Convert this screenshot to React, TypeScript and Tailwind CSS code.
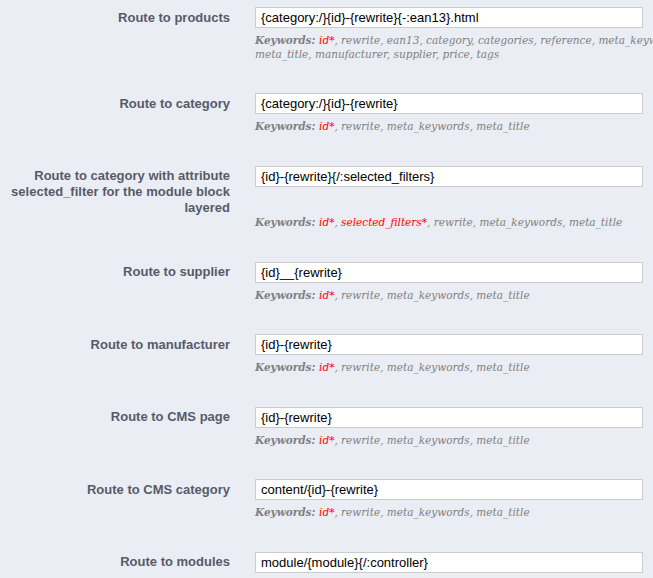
import React from "react";

type Kw = { text: string; req?: boolean };

type Route = {
  label: string;
  value: string;
  keywords: Kw[][];
};

const routes: Route[] = [
  {
    label: "Route to products",
    value: "{category:/}{id}-{rewrite}{-:ean13}.html",
    keywords: [
      [
        { text: "id*", req: true },
        { text: "rewrite" },
        { text: "ean13" },
        { text: "category" },
        { text: "categories" },
        { text: "reference" },
        { text: "meta_keywords" },
      ],
      [
        { text: "meta_title" },
        { text: "manufacturer" },
        { text: "supplier" },
        { text: "price" },
        { text: "tags" },
      ],
    ],
  },
  {
    label: "Route to category",
    value: "{category:/}{id}-{rewrite}",
    keywords: [[{ text: "id*", req: true }, { text: "rewrite" }, { text: "meta_keywords" }, { text: "meta_title" }]],
  },
  {
    label: "Route to category with attribute selected_filter for the module block layered",
    value: "{id}-{rewrite}{/:selected_filters}",
    keywords: [
      [
        { text: "id*", req: true },
        { text: "selected_filters*", req: true },
        { text: "rewrite" },
        { text: "meta_keywords" },
        { text: "meta_title" },
      ],
    ],
  },
  {
    label: "Route to supplier",
    value: "{id}__{rewrite}",
    keywords: [[{ text: "id*", req: true }, { text: "rewrite" }, { text: "meta_keywords" }, { text: "meta_title" }]],
  },
  {
    label: "Route to manufacturer",
    value: "{id}-{rewrite}",
    keywords: [[{ text: "id*", req: true }, { text: "rewrite" }, { text: "meta_keywords" }, { text: "meta_title" }]],
  },
  {
    label: "Route to CMS page",
    value: "{id}-{rewrite}",
    keywords: [[{ text: "id*", req: true }, { text: "rewrite" }, { text: "meta_keywords" }, { text: "meta_title" }]],
  },
  {
    label: "Route to CMS category",
    value: "content/{id}-{rewrite}",
    keywords: [[{ text: "id*", req: true }, { text: "rewrite" }, { text: "meta_keywords" }, { text: "meta_title" }]],
  },
  {
    label: "Route to modules",
    value: "module/{module}{/:controller}",
    keywords: [],
  },
];

export default function App() {
  return (
    <div className="w-[653px] h-[578px] overflow-hidden bg-[#ebedf4] pt-[7px] font-['Liberation_Sans',Arial,sans-serif]">
      {routes.map((r) => (
        <RouteRow key={r.label} route={r} />
      ))}
    </div>
  );
}

function RouteRow({ route }: { route: Route }) {
  const lines = route.keywords;
  return (
    <div className="grid grid-cols-[230px_450px] gap-x-[25px] mb-[32px]">
      <label className="pt-[2.5px] text-right text-[13px] leading-[16px] font-bold text-[#585a69]">
        {route.label}
      </label>
      <div className="pb-[6px]">
        <input
          readOnly
          value={route.value}
          className="block w-[388px] h-[21px] border border-[#cccccc] bg-white px-[5px] text-[13px] text-black outline-none font-['Liberation_Sans',Arial,sans-serif]"
        />
      </div>
      {lines.length > 0 && (
        <p className="col-start-2 whitespace-nowrap text-[10.5px] leading-[13.5px] italic text-[#808080] font-['DejaVu_Serif',Georgia,serif]">
          {lines.map((line, li) => (
            <span key={li} className="block">
              {li === 0 && <b className="font-bold">Keywords: </b>}
              {line.map((k, ki) => (
                <React.Fragment key={k.text}>
                  <span className={k.req ? "text-[#ff0000]" : ""}>{k.text}</span>
                  {(ki < line.length - 1 || li < lines.length - 1) && ", "}
                </React.Fragment>
              ))}
            </span>
          ))}
        </p>
      )}
    </div>
  );
}
